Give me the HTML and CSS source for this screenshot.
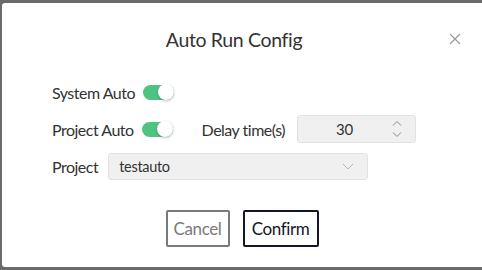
FILE: index.html
```html
<!DOCTYPE html>
<html>
<head>
<meta charset="utf-8">
<link rel="stylesheet" href="styles.css">
</head>
<body>
<div class="dialog">
  <div class="header">
    <div class="title">Auto Run Config</div>
    <div class="close">
      <svg width="12" height="12" viewBox="0 0 12 12"><path d="M1 1L11 11M11 1L1 11" stroke="#9a9a9a" stroke-width="1.2" fill="none"/></svg>
    </div>
  </div>
  <div class="form">
    <div class="row">
      <span class="label">System Auto</span>
      <span class="toggle"><span class="knob"></span></span>
    </div>
    <div class="row">
      <span class="label">Project Auto</span>
      <span class="toggle"><span class="knob"></span></span>
      <span class="label delay">Delay time(s)</span>
      <div class="number">
        <span class="num-value">30</span>
        <span class="spin">
          <svg width="10" height="7" viewBox="0 0 10 7"><path d="M1 5.5L5 1.5L9 5.5" stroke="#8a8a8a" stroke-width="1" fill="none"/></svg>
          <svg width="10" height="7" viewBox="0 0 10 7"><path d="M1 1.5L5 5.5L9 1.5" stroke="#8a8a8a" stroke-width="1" fill="none"/></svg>
        </span>
      </div>
    </div>
    <div class="row">
      <span class="label proj-label">Project</span>
      <div class="select">
        <span>testauto</span>
        <svg width="12" height="7" viewBox="0 0 12 7"><path d="M1 1L6 6L11 1" stroke="#b5b5b5" stroke-width="1" fill="none"/></svg>
      </div>
    </div>
  </div>
  <div class="footer">
    <button class="btn cancel">Cancel</button>
    <button class="btn confirm">Confirm</button>
  </div>
</div>
</body>
</html>
```
FILE: styles.css
```css
html, body {
  margin: 0;
  padding: 0;
  background: #6b6b6b;
  height: 270px;
  overflow: hidden;
}
body {
  padding-top: 3px;
  padding-left: 2px;
  font-family: Lato, "Open Sans", sans-serif;
  color: #333;
}
.dialog {
  width: 482px;
  height: 264px;
  background: #fff;
  border-radius: 3px;
}
.header {
  height: 72px;
  display: flex;
  align-items: center;
  padding-left: 20px;
  padding-right: 20px;
}
.title {
  flex: 1;
  text-align: center;
  font-size: 19.5px;
  letter-spacing: -0.35px;
  color: #333;
}
.close {
  width: 18px;
  display: flex;
  justify-content: center;
}
.form {
  margin-top: 3px;
  padding-left: 50px;
  display: flex;
  flex-direction: column;
  gap: 9px;
}
.row {
  height: 28px;
  display: flex;
  align-items: center;
}
.label {
  font-size: 16px;
  letter-spacing: -0.5px;
  color: #333;
  margin-right: 8px;
}
.proj-label {
  margin-right: 10px;
}
.toggle {
  width: 31px;
  height: 15px;
  background: #4fc482;
  border-radius: 8px;
  display: flex;
  align-items: center;
  justify-content: flex-end;
}
.knob {
  width: 16px;
  height: 16px;
  border-radius: 50%;
  background: #fff;
  box-shadow: 0 1px 3px rgba(0,0,0,0.25);
}
.delay {
  margin-left: 29px;
  margin-right: 12px;
}
.number {
  width: 119px;
  height: 28px;
  box-sizing: border-box;
  background: #f0f0f0;
  border: 1px solid #e2e2e2;
  border-radius: 3px;
  display: flex;
  align-items: center;
  font-size: 15px;
}
.num-value {
  flex: 1;
  text-align: center;
  padding-left: 12px;
}
.spin {
  width: 36px;
  display: flex;
  flex-direction: column;
  align-items: center;
  gap: 4px;
}
.select {
  width: 260px;
  height: 27px;
  box-sizing: border-box;
  background: #f0f0f0;
  border: 1px solid #e2e2e2;
  border-radius: 3px;
  display: flex;
  align-items: center;
  justify-content: space-between;
  padding: 0 13px 0 10px;
  font-size: 14.5px;
  letter-spacing: -0.3px;
  color: #333;
}
.footer {
  margin-top: 30px;
  display: flex;
  justify-content: center;
  gap: 13px;
  padding-right: 2px;
}
.btn {
  height: 37px;
  box-sizing: border-box;
  background: #fff;
  border-radius: 2px;
  font-family: Lato, "Open Sans", sans-serif;
  font-size: 17px;
  letter-spacing: -0.4px;
  padding: 0;
}
.cancel {
  width: 64px;
  border: 2px solid #7a7a7a;
  color: #7a7a7a;
}
.confirm {
  width: 76px;
  border: 2px solid #151528;
  color: #151528;
}
```
